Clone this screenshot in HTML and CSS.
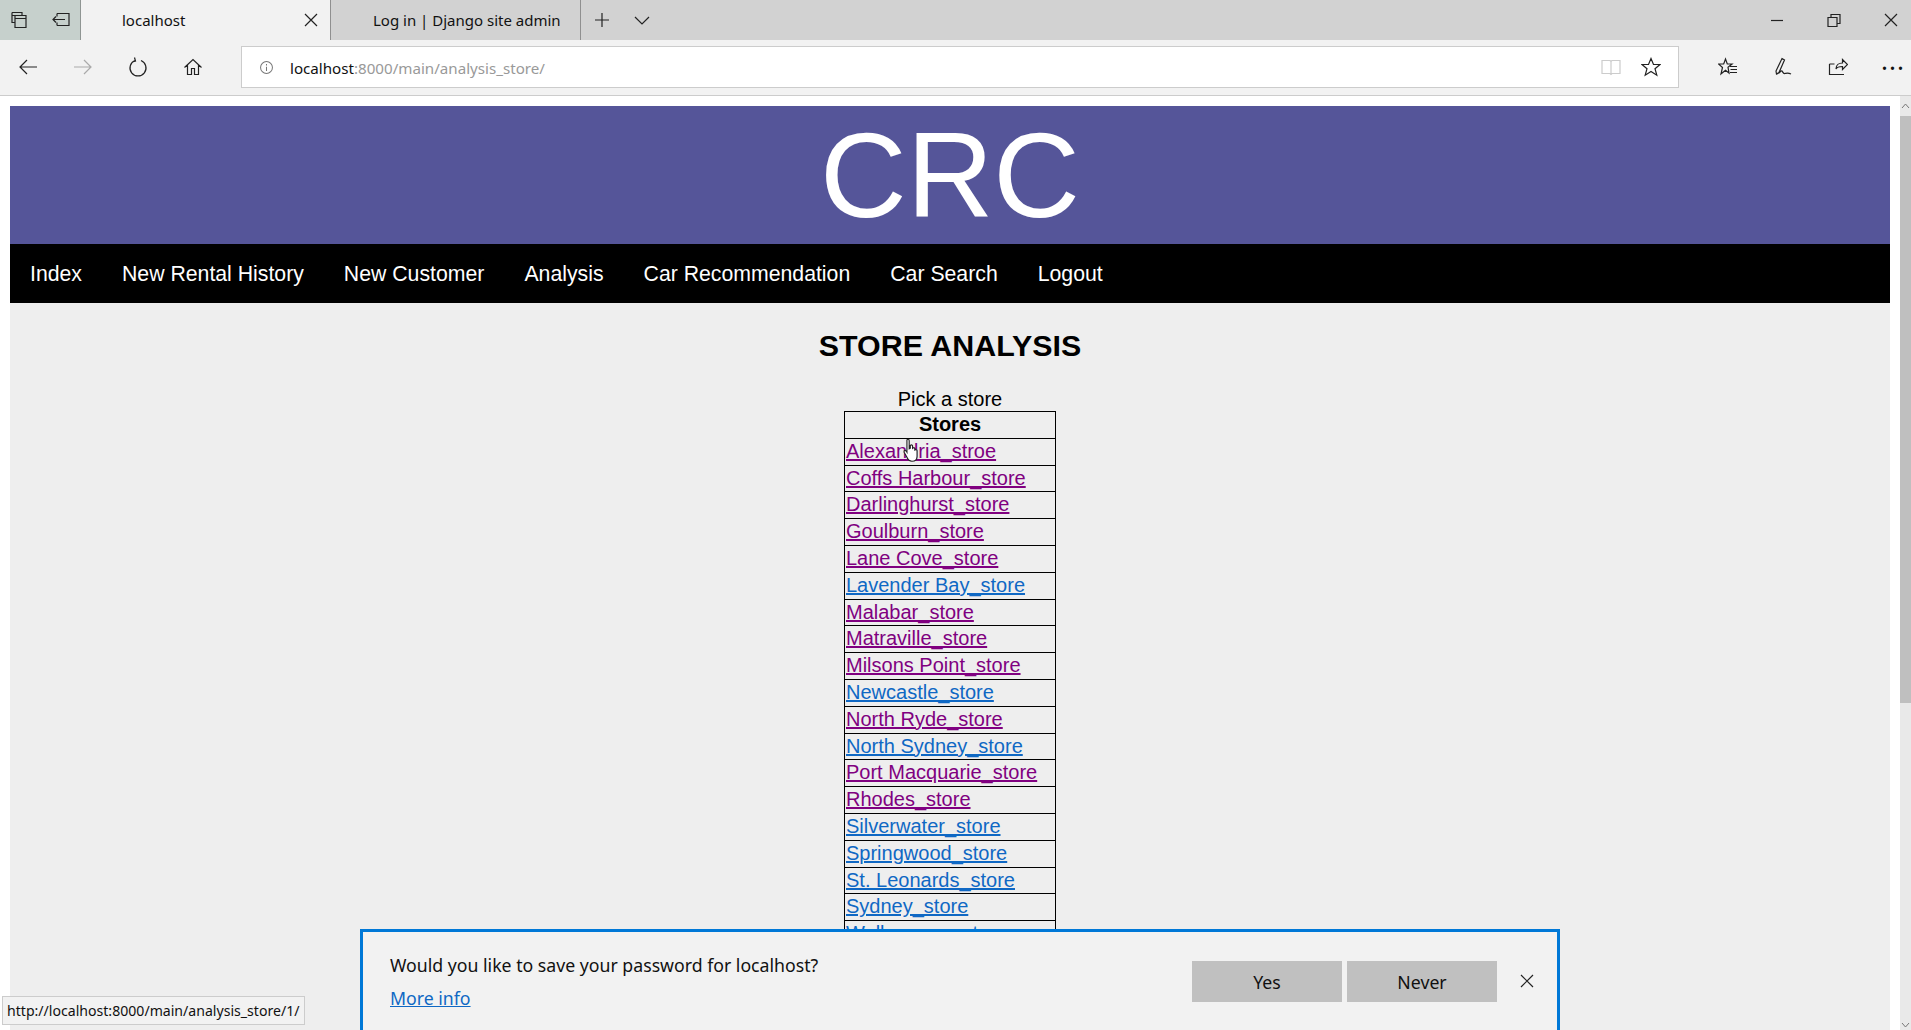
FILE: index.html
```html
<!DOCTYPE html>
<html lang="en">
<head>
    <meta charset="UTF-8">
    <title>localhost</title>
    <link rel="stylesheet" href="styles.css">
</head>
<body>
<div class="window">
    <div class="tabbar">
        <div class="tab-tools">
            <svg class="icon" viewBox="0 0 20 20"><path d="M3 2.500h10v3M3 2.500v10h3M6 5.500h11v12H6zM6 8.500h11M3 5.500h3"/></svg>
            <svg class="icon" viewBox="0 0 20 20"><path d="M6 3.500h12v12H6M6 3.500v3M6 12.500v3M14 9.500H2M5 6.500l-3 3 3 3"/></svg>
        </div>
        <div class="tab tab-active">
            <span>localhost</span>
            <svg class="icon" viewBox="0 0 20 20"><path d="M4 4l12 12M16 4L4 16"/></svg>
        </div>
        <div class="tab">
            <span>Log in | Django site admin</span>
        </div>
        <div class="tab-new">
            <svg class="icon" viewBox="0 0 20 20"><path d="M10 3v14M3 10h14"/></svg>
            <svg class="icon" viewBox="0 0 20 20"><path d="M3 7l7 7 7-7"/></svg>
        </div>
        <div class="win-controls">
            <svg class="icon" viewBox="0 0 20 20"><path d="M4 10.500h12"/></svg>
            <svg class="icon" viewBox="0 0 20 20"><path d="M4 7.500h9v9H4zM7 7.500v-3h9v9h-3"/></svg>
            <svg class="icon" viewBox="0 0 20 20"><path d="M4 4l12 12M16 4L4 16"/></svg>
        </div>
    </div>

    <div class="toolbar">
        <div class="nav-buttons">
            <svg class="icon" viewBox="0 0 20 20"><path d="M19 10H2M9 3l-7 7 7 7"/></svg>
            <svg class="icon icon-off" viewBox="0 0 20 20"><path d="M1 10h17M11 3l7 7-7 7"/></svg>
            <svg class="icon" viewBox="0 0 20 20"><path d="M7 3.500a8 8 0 1 0 6 0M6.500 0.500l1 3.500-3.500 1"/></svg>
            <svg class="icon" viewBox="0 0 20 20"><path d="M1.500 10.500L10 2.500l8.500 8M4.500 8v9.500h4v-6h3v6h4V8"/></svg>
        </div>
        <div class="address">
            <svg class="icon icon-info" viewBox="0 0 20 20"><circle cx="10" cy="10" r="7"/><path d="M10 9v5M10 6v1.500"/></svg>
            <span class="url"><b>localhost</b>:8000/main/analysis_store/</span>
            <svg class="icon icon-book" viewBox="0 0 20 20"><path d="M1 3.500h8l1 1 1-1h8v13H11l-1 1-1-1H1zM10 4.500v12"/></svg>
            <svg class="icon" viewBox="0 0 20 20"><path d="M10 1.500l2.500 6h6.500l-5 4.200 1.800 6.500-5.800-3.700-5.800 3.700 1.800-6.500-5-4.200h6.500z"/></svg>
        </div>
        <div class="tool-buttons">
            <svg class="icon" viewBox="0 0 20 20"><path d="M7.500 2l1.800 5H14l-4 3.200L11 16l-3.500-2.800L3 17l1.500-6.500L0.500 7h5.200zM12 9.500h7M12.500 12.500h6.500M12 15.500h7"/></svg>
            <svg class="icon" viewBox="0 0 20 20"><path d="M9 1.500l2.500 1.500L6 15.500l-2.500 1.500-.5-3zM4 17c3-1 4-4 5-3s1 3 3 2.500 3-1 6 .5"/></svg>
            <svg class="icon" viewBox="0 0 20 20"><path d="M1.500 7v10.500h14.500M1.500 7h5M8 12c0-4 3-6 6.500-6V2.500l5 5-5 5V9.500C11.500 9.500 9 10 8 12z"/></svg>
            <span class="dots">&middot;&middot;&middot;</span>
        </div>
    </div>

    <div class="viewport">
        <div class="page">
            <header class="site-head">
                <h1>CRC</h1>
            </header>
            <nav class="site-nav">
                <a href="#">Index</a>
                <a href="#">New Rental History</a>
                <a href="#">New Customer</a>
                <a href="#">Analysis</a>
                <a href="#">Car Recommendation</a>
                <a href="#">Car Search</a>
                <a href="#">Logout</a>
            </nav>
            <main class="content">
                <h2>STORE ANALYSIS</h2>
                <p class="pick">Pick a store</p>
                <table class="stores">
                    <tr><th>Stores</th></tr>
                    <tr><td><a class="seen" href="#">Alexandria_stroe</a></td></tr>
                    <tr><td><a class="seen" href="#">Coffs Harbour_store</a></td></tr>
                    <tr><td><a class="seen" href="#">Darlinghurst_store</a></td></tr>
                    <tr><td><a class="seen" href="#">Goulburn_store</a></td></tr>
                    <tr><td><a class="seen" href="#">Lane Cove_store</a></td></tr>
                    <tr><td><a href="#">Lavender Bay_store</a></td></tr>
                    <tr><td><a class="seen" href="#">Malabar_store</a></td></tr>
                    <tr><td><a class="seen" href="#">Matraville_store</a></td></tr>
                    <tr><td><a class="seen" href="#">Milsons Point_store</a></td></tr>
                    <tr><td><a href="#">Newcastle_store</a></td></tr>
                    <tr><td><a class="seen" href="#">North Ryde_store</a></td></tr>
                    <tr><td><a href="#">North Sydney_store</a></td></tr>
                    <tr><td><a class="seen" href="#">Port Macquarie_store</a></td></tr>
                    <tr><td><a class="seen" href="#">Rhodes_store</a></td></tr>
                    <tr><td><a href="#">Silverwater_store</a></td></tr>
                    <tr><td><a href="#">Springwood_store</a></td></tr>
                    <tr><td><a href="#">St. Leonards_store</a></td></tr>
                    <tr><td><a href="#">Sydney_store</a></td></tr>
                    <tr><td><a href="#">Wollongong_store</a></td></tr>
                </table>
            </main>
        </div>
        <div class="scrollbar">
            <svg class="arrow" viewBox="0 0 11 10"><path d="M2 7l3.500-4 3.500 4"/></svg>
            <div class="thumb"></div>
            <svg class="arrow arrow-down" viewBox="0 0 11 10"><path d="M2 3l3.500 4 3.500-4"/></svg>
        </div>

        <!-- pointer over the first link -->
        <svg class="pointer" viewBox="0 0 16 22"><path d="M3.500 1.500c1-1 2-.5 2 1v7l1-.5V6.500c1-.8 2-.5 2 .5v2c1-.8 2-.5 2 .5v1c1-.6 2-.3 2 .8V16c0 3-2 4.500-4.500 4.500S4.500 19.500 3.500 17L1 12.500c-.5-1.500 1-2 2-.8l.5.8z"/></svg>

        <div class="status-url">http://localhost:8000/main/analysis_store/1/</div>

        <div class="save-prompt">
            <div class="prompt-text">
                <p>Would you like to save your password for localhost?</p>
                <a href="#">More info</a>
            </div>
            <button type="button">Yes</button>
            <button type="button">Never</button>
            <svg class="icon prompt-close" viewBox="0 0 20 20"><path d="M4 4l12 12M16 4L4 16"/></svg>
        </div>
    </div>
</div>
</body>
</html>
```

FILE: styles.css
```css
/* window */
html, body {
    margin: 0;
    height: 100%;
    overflow: hidden;
}

.window {
    height: 1030px;
    display: flex;
    flex-direction: column;
    font-family: "Noto Sans", "Open Sans", sans-serif;
    color: #111;
}

.icon {
    width: 20px;
    height: 20px;
    fill: none;
    stroke: #222;
    stroke-width: 1.2;
    flex: none;
}

/* tab strip */
.tabbar {
    height: 40px;
    display: flex;
    align-items: stretch;
    background-color: #d2d2d2;
    flex: none;
}

.tab-tools {
    width: 81px;
    background-color: #c6d0cc;
    display: flex;
    align-items: center;
    gap: 22px;
    padding-left: 9px;
    box-sizing: border-box;
    border-right: 1px solid #8f9593;
}

.tab {
    width: 250px;
    box-sizing: border-box;
    padding-left: 42px;
    display: flex;
    align-items: center;
    justify-content: space-between;
    font-size: 15px;
    border-right: 1px solid #8f8f8f;
}

.tab-active {
    background-color: #f2f2f2;
    padding-left: 41px;
    padding-right: 9px;
}

.tab-new {
    display: flex;
    align-items: center;
    gap: 20px;
    padding-left: 11px;
}

.win-controls {
    margin-left: auto;
    display: flex;
    align-items: center;
    gap: 37px;
    padding-right: 10px;
}

/* address bar */
.toolbar {
    height: 56px;
    box-sizing: border-box;
    display: flex;
    align-items: center;
    background-color: #f2f2f2;
    border-bottom: 1px solid #ccc;
    padding-bottom: 1px;
    flex: none;
}

.nav-buttons {
    width: 241px;
    box-sizing: border-box;
    padding-left: 18px;
    display: flex;
    gap: 35px;
}

.icon-off {
    stroke: #aaa;
}

.address {
    width: 1438px;
    height: 42px;
    box-sizing: border-box;
    background-color: #fff;
    border: 1px solid #ccc;
    display: flex;
    align-items: center;
    padding: 0 17px 0 16px;
}

.icon-info {
    width: 17px;
    height: 17px;
    stroke: #777;
    margin-right: 15px;
}

.url {
    font-size: 15.15px;
    color: #999;
    flex: 1;
    padding-top: 1px;
}

.url b {
    font-weight: normal;
    color: #111;
}

.icon-book {
    stroke: #ccc;
    margin-right: 20px;
}

.tool-buttons {
    display: flex;
    align-items: center;
    gap: 35px;
    padding-left: 39px;
}

.dots {
    font-size: 26px;
    line-height: 20px;
    letter-spacing: 1px;
    margin-left: -2px;
}

/* page area */
.viewport {
    flex: 1;
    min-height: 0;
    display: flex;
    position: relative;
    background-color: #fff;
}

.page {
    flex: 1;
    padding: 10px 10px 0;
    display: flex;
    flex-direction: column;
    overflow: hidden;
    font-family: "Liberation Sans", Arial, sans-serif;
    color: #000;
}

.site-head {
    background-color: #555599;
    height: 138px;
    flex: none;
}

.site-head h1 {
    margin: 0;
    color: #fff;
    font-size: 120px;
    font-weight: normal;
    line-height: 138px;
    text-align: center;
}

.site-nav {
    background-color: #000;
    height: 59px;
    display: flex;
    align-items: center;
    flex: none;
}

.site-nav a {
    color: #fff;
    font-size: 21.25px;
    text-decoration: none;
    padding: 1px 20px 0;
}

.content {
    flex: 1;
    background-color: #eee;
    text-align: center;
}

.content h2 {
    margin: 25px 0 0;
    font-size: 30.4px;
    line-height: 34px;
}

.pick {
    margin: 25px 0 0;
    font-size: 20px;
    line-height: 24px;
}

.stores {
    border-collapse: collapse;
    margin: 0 auto;
    width: 212px;
    font-size: 20px;
    text-align: left;
}

.stores th,
.stores td {
    border: 1px solid #000;
    padding: 1px;
    line-height: 23.8px;
}

.stores th {
    text-align: center;
}

.stores a {
    color: #0f68c4;
}

.stores a.seen {
    color: #800080;
}

.scrollbar {
    width: 11px;
    background-color: #e9e9e9;
    display: flex;
    flex-direction: column;
    flex: none;
}

.arrow {
    width: 11px;
    height: 10px;
    fill: none;
    stroke: #777;
    flex: none;
    margin-top: 5px;
}

.thumb {
    height: 587px;
    margin-top: 5px;
    background-color: #bfbfbf;
}

.arrow-down {
    margin-top: auto;
}

/* things that sit over the page */
.pointer {
    position: absolute;
    left: 903px;
    top: 342px;
    width: 18px;
    height: 25px;
    fill: #fff;
    stroke: #222;
    stroke-width: 1;
}

.status-url {
    position: absolute;
    left: 2px;
    top: 900px;
    height: 29px;
    box-sizing: border-box;
    padding: 0 5px 0 4px;
    line-height: 27px;
    font-size: 14.1px;
    background-color: #f2f2f2;
    border: 1px solid #ccc;
    white-space: nowrap;
}

.save-prompt {
    position: absolute;
    left: 360px;
    top: 833px;
    width: 1200px;
    height: 110px;
    box-sizing: border-box;
    border: 3px solid #0078d7;
    border-bottom: none;
    background-color: #f2f2f2;
    display: flex;
    align-items: flex-start;
    padding: 20px 0 0 27px;
    gap: 5px;
}

.prompt-text {
    flex: 1;
    font-size: 17.7px;
}

.prompt-text p {
    margin: 0;
    line-height: 26px;
}

.prompt-text a {
    display: inline-block;
    margin-top: 7px;
    line-height: 26px;
    color: #0f68c4;
}

.save-prompt button {
    width: 150px;
    height: 41px;
    margin-top: 9px;
    border: none;
    background-color: #c0c0c0;
    font-family: inherit;
    font-size: 17.7px;
    color: #111;
}

.prompt-close {
    margin: 19px 20px 0 15px;
}
```
